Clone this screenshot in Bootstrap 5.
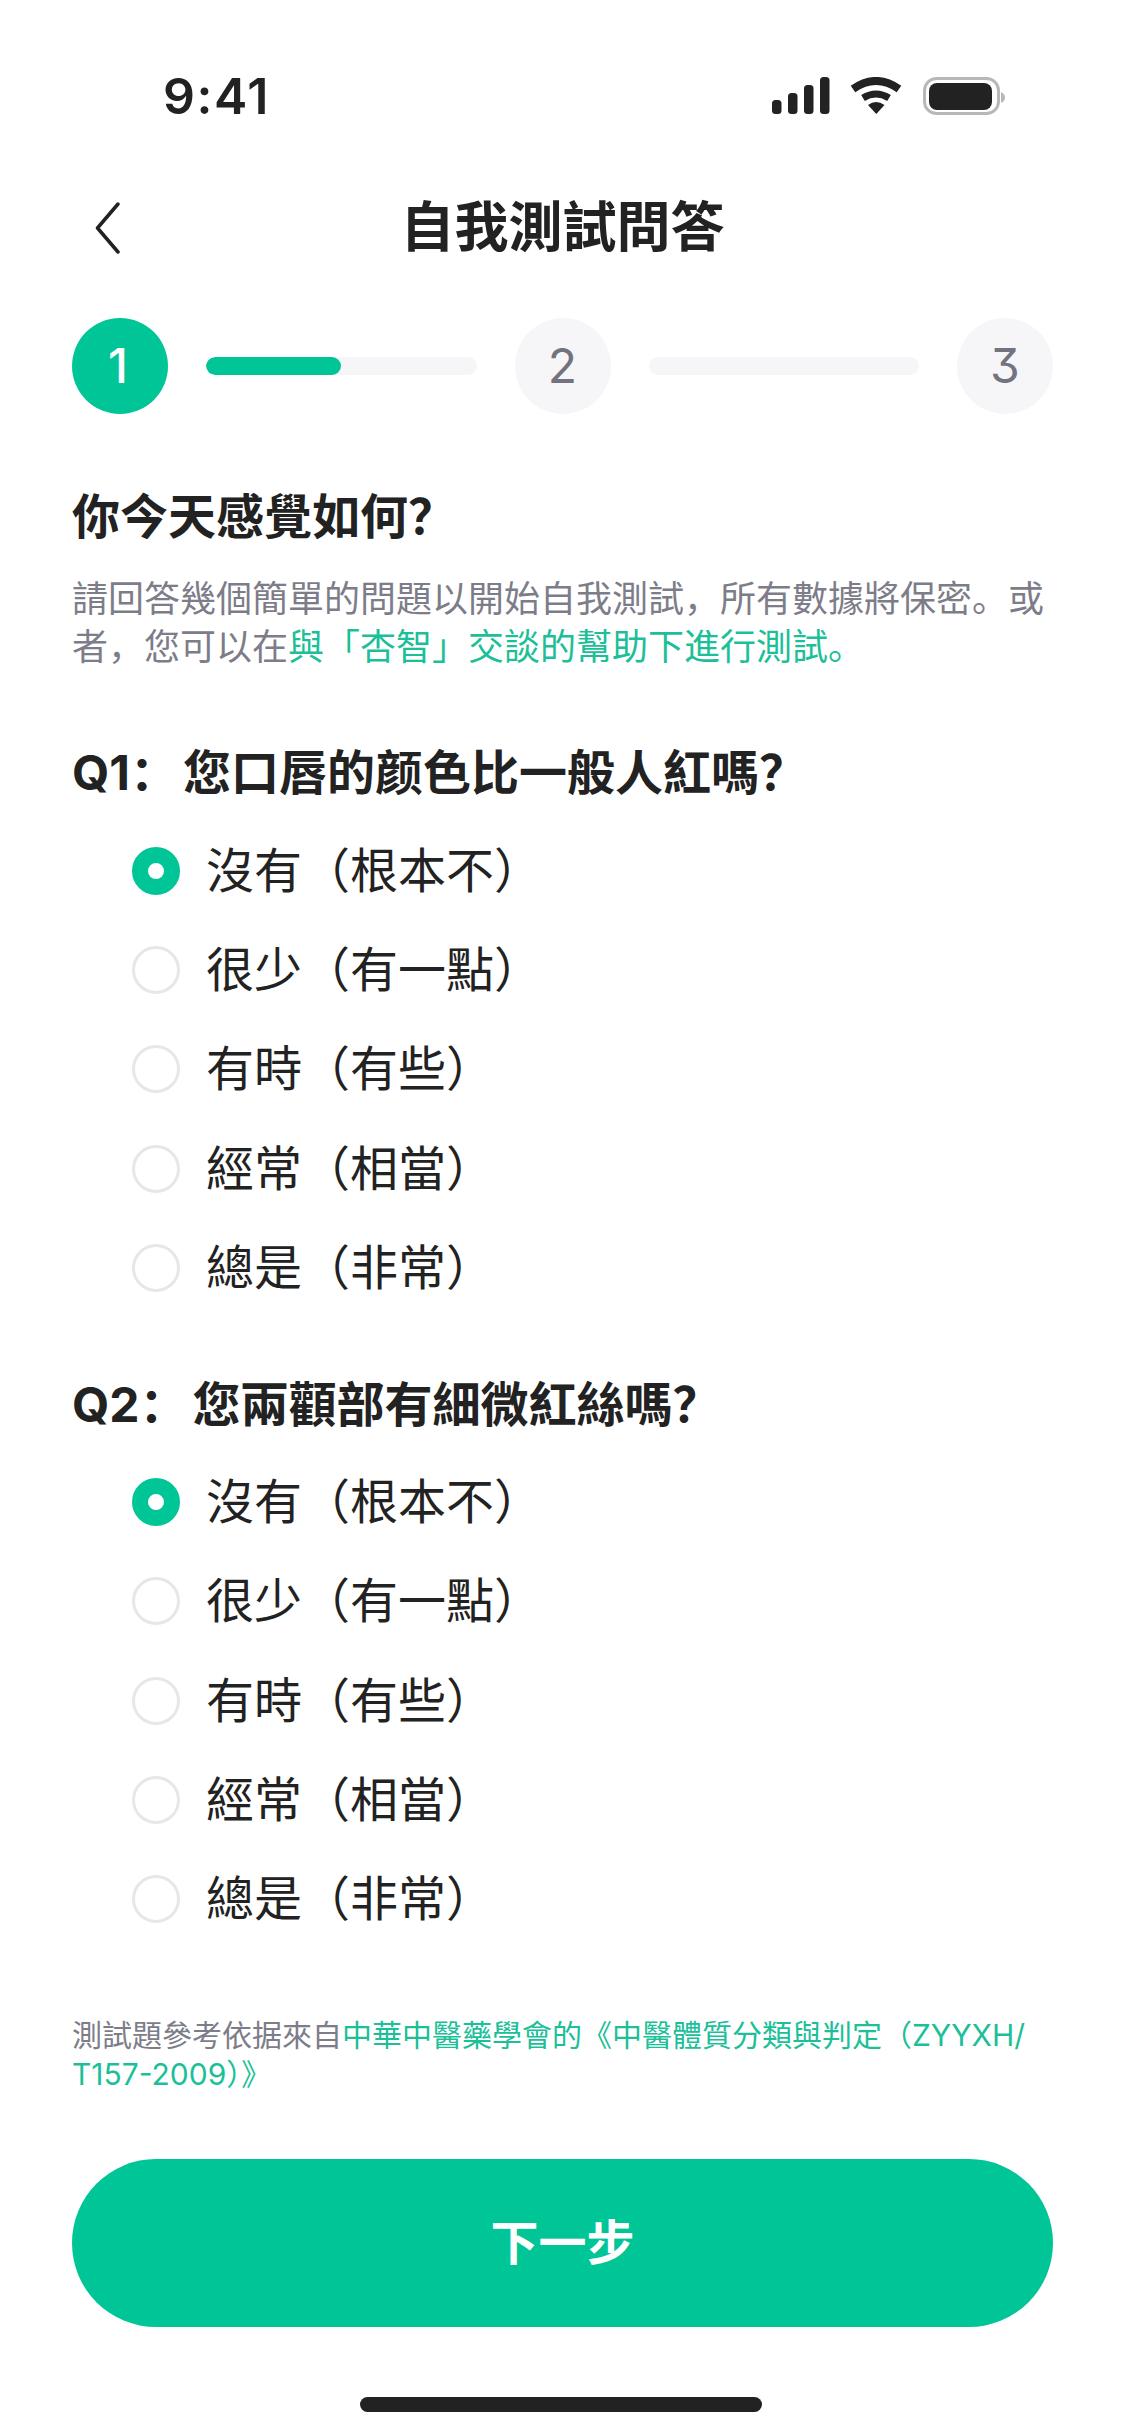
<!DOCTYPE html>
<html lang="zh">
<head>
<meta charset="utf-8">
<title>自我測試問答</title>
<link href="https://cdn.jsdelivr.net/npm/bootstrap@5.3.0/dist/css/bootstrap.min.css" rel="stylesheet">
<style>
html,body{width:1125px;height:2436px;margin:0;overflow:hidden;background:#fff}
body{font-family:"Inter","Noto Sans CJK SC","Noto Sans CJK TC",sans-serif;color:#222}
.status-row{height:72px;margin-top:60px;padding:0 120px 0 163px}
.clock{font-size:50px;font-weight:600;line-height:72px;letter-spacing:1.5px}
.top-head{height:60px;margin-top:66px;padding:0 95px}
.head-side{flex:1 1 0;min-width:0}
.head-title{font-size:54px;font-weight:700;line-height:60px}
.page-body{padding:0 72px}
.stepper{margin-top:60px;gap:38px}
.step-dot{width:96px;height:96px;flex:none;font-size:48px;font-weight:400;background:#f6f6f8;color:#73737f;font-feature-settings:"cv09"}
.step-on{background:#00c596;color:#fff;font-weight:500;padding-right:4px}
.step-track{height:18px;background:#f6f6f8;flex:1 1 0}
.step-fill{width:50%;height:100%;background:#00c596}
.lead-head{font-size:48px;font-weight:700;line-height:64px;margin-top:71px}
.lead-copy{font-size:36px;line-height:48px;color:#7d7d89;margin-top:26px}
.tint{color:#1cbf98;text-decoration:none}
.q-head{font-size:48px;font-weight:700;line-height:64px}
.q-tag{margin-right:5px}
.q-one{margin-top:70px}
.q-two{margin-top:56px}
.opts{margin-top:16px;padding-left:60px}
.opts-low{margin-top:15px}
.opt{height:99.3px;gap:26px;font-size:48px;line-height:60px;margin:0;padding:0;min-height:0}
.form-check-input.pick{width:48px;height:48px;margin:0;float:none;flex:none;border:3px solid #e7e7e9;background-color:#fff}
.form-check-input.pick:checked{background-image:none;background-color:#fff;border:16px solid #00c596}
.opt .form-check-label{opacity:1;color:#222}
.src-note{font-size:30px;line-height:39px;color:#7d7d89;margin-top:67.5px}
.next-btn{height:168px;margin-top:64.5px;font-size:48px;font-weight:700;background:#00c596;border:0;color:#fff;line-height:1}
.home-bar{width:402px;height:15px;background:#222;margin:70px 0 0 288px}
</style>
</head>
<body>
<div class="status-row d-flex justify-content-between align-items-center">
  <span class="clock">9:41</span>
  <svg width="233" height="38" viewBox="0 0 233 38" fill="none" aria-hidden="true">
    <rect x="0" y="23" width="9.5" height="14" rx="3.5" fill="#222"/>
    <rect x="16" y="16" width="9.5" height="21" rx="3.5" fill="#222"/>
    <rect x="32" y="8" width="9.5" height="29" rx="3.5" fill="#222"/>
    <rect x="48" y="0" width="9.5" height="37" rx="3.5" fill="#222"/>
    <path d="M81 12Q104-4 127 12" stroke="#222" stroke-width="8"/>
    <path d="M91 21Q104 13 117 21" stroke="#222" stroke-width="7"/>
    <path d="M104.3 37L96 28Q104 22 112.5 28Z" fill="#222"/>
    <rect x="152.5" y="1.5" width="74" height="35" rx="12" stroke="#b8b8b8" stroke-width="3"/>
    <rect x="157" y="6" width="63" height="27" rx="8" fill="#222"/>
    <path d="M229 15V26Q233 24 233 20.500Q233 17 229 15Z" fill="#b8b8b8"/>
  </svg>
</div>

<header class="top-head d-flex align-items-center">
  <div class="head-side">
    <svg width="26" height="52" viewBox="0 0 26 52" fill="none" class="d-block" aria-hidden="true">
      <path d="M23 2L2.500 26L23 50" stroke="#222" stroke-width="3.500" stroke-linecap="round" stroke-linejoin="round"/>
    </svg>
  </div>
  <div class="head-title">自我測試問答</div>
  <div class="head-side"></div>
</header>

<main class="page-body">
  <div class="stepper d-flex align-items-center">
    <div class="step-dot step-on rounded-circle d-flex align-items-center justify-content-center">1</div>
    <div class="step-track rounded-pill overflow-hidden"><div class="step-fill rounded-pill"></div></div>
    <div class="step-dot rounded-circle d-flex align-items-center justify-content-center">2</div>
    <div class="step-track rounded-pill"></div>
    <div class="step-dot rounded-circle d-flex align-items-center justify-content-center">3</div>
  </div>

  <h1 class="lead-head mb-0">你今天感覺如何&#xFF1F;</h1>
  <p class="lead-copy mb-0">請回答幾個簡單的問題以開始自我測試&#xFF0C;所有數據將保密。或者&#xFF0C;您可以在<a class="tint" href="#">與「杏智」交談的幫助下進行測試。</a></p>

  <h2 class="q-head q-one mb-0"><span class="q-tag">Q1&#xFF1A;</span>您口唇的颜色比一般人紅嗎&#xFF1F;</h2>
  <div class="opts">
    <div class="form-check opt d-flex align-items-center"><input class="form-check-input pick" type="radio" name="q1" id="a1" checked><label class="form-check-label" for="a1">沒有&#xFF08;根本不&#xFF09;</label></div>
    <div class="form-check opt d-flex align-items-center"><input class="form-check-input pick" type="radio" name="q1" id="a2"><label class="form-check-label" for="a2">很少&#xFF08;有一點&#xFF09;</label></div>
    <div class="form-check opt d-flex align-items-center"><input class="form-check-input pick" type="radio" name="q1" id="a3"><label class="form-check-label" for="a3">有時&#xFF08;有些&#xFF09;</label></div>
    <div class="form-check opt d-flex align-items-center"><input class="form-check-input pick" type="radio" name="q1" id="a4"><label class="form-check-label" for="a4">經常&#xFF08;相當&#xFF09;</label></div>
    <div class="form-check opt d-flex align-items-center"><input class="form-check-input pick" type="radio" name="q1" id="a5"><label class="form-check-label" for="a5">總是&#xFF08;非常&#xFF09;</label></div>
  </div>

  <h2 class="q-head q-two mb-0"><span class="q-tag">Q2&#xFF1A;</span>您兩顴部有細微紅絲嗎&#xFF1F;</h2>
  <div class="opts opts-low">
    <div class="form-check opt d-flex align-items-center"><input class="form-check-input pick" type="radio" name="q2" id="b1" checked><label class="form-check-label" for="b1">沒有&#xFF08;根本不&#xFF09;</label></div>
    <div class="form-check opt d-flex align-items-center"><input class="form-check-input pick" type="radio" name="q2" id="b2"><label class="form-check-label" for="b2">很少&#xFF08;有一點&#xFF09;</label></div>
    <div class="form-check opt d-flex align-items-center"><input class="form-check-input pick" type="radio" name="q2" id="b3"><label class="form-check-label" for="b3">有時&#xFF08;有些&#xFF09;</label></div>
    <div class="form-check opt d-flex align-items-center"><input class="form-check-input pick" type="radio" name="q2" id="b4"><label class="form-check-label" for="b4">經常&#xFF08;相當&#xFF09;</label></div>
    <div class="form-check opt d-flex align-items-center"><input class="form-check-input pick" type="radio" name="q2" id="b5"><label class="form-check-label" for="b5">總是&#xFF08;非常&#xFF09;</label></div>
  </div>

  <p class="src-note mb-0">測試題參考依据來自<a class="tint" href="#">中華中醫藥學會的《中醫體質分類與判定&#xFF08;ZYYXH/<wbr>T157-2009&#xFF09;》</a></p>

  <button type="button" class="btn next-btn rounded-pill w-100 d-flex align-items-center justify-content-center">下一步</button>
  <div class="home-bar rounded-pill"></div>
</main>
<script src="https://cdn.jsdelivr.net/npm/bootstrap@5.3.0/dist/js/bootstrap.bundle.min.js"></script>
</body>
</html>
